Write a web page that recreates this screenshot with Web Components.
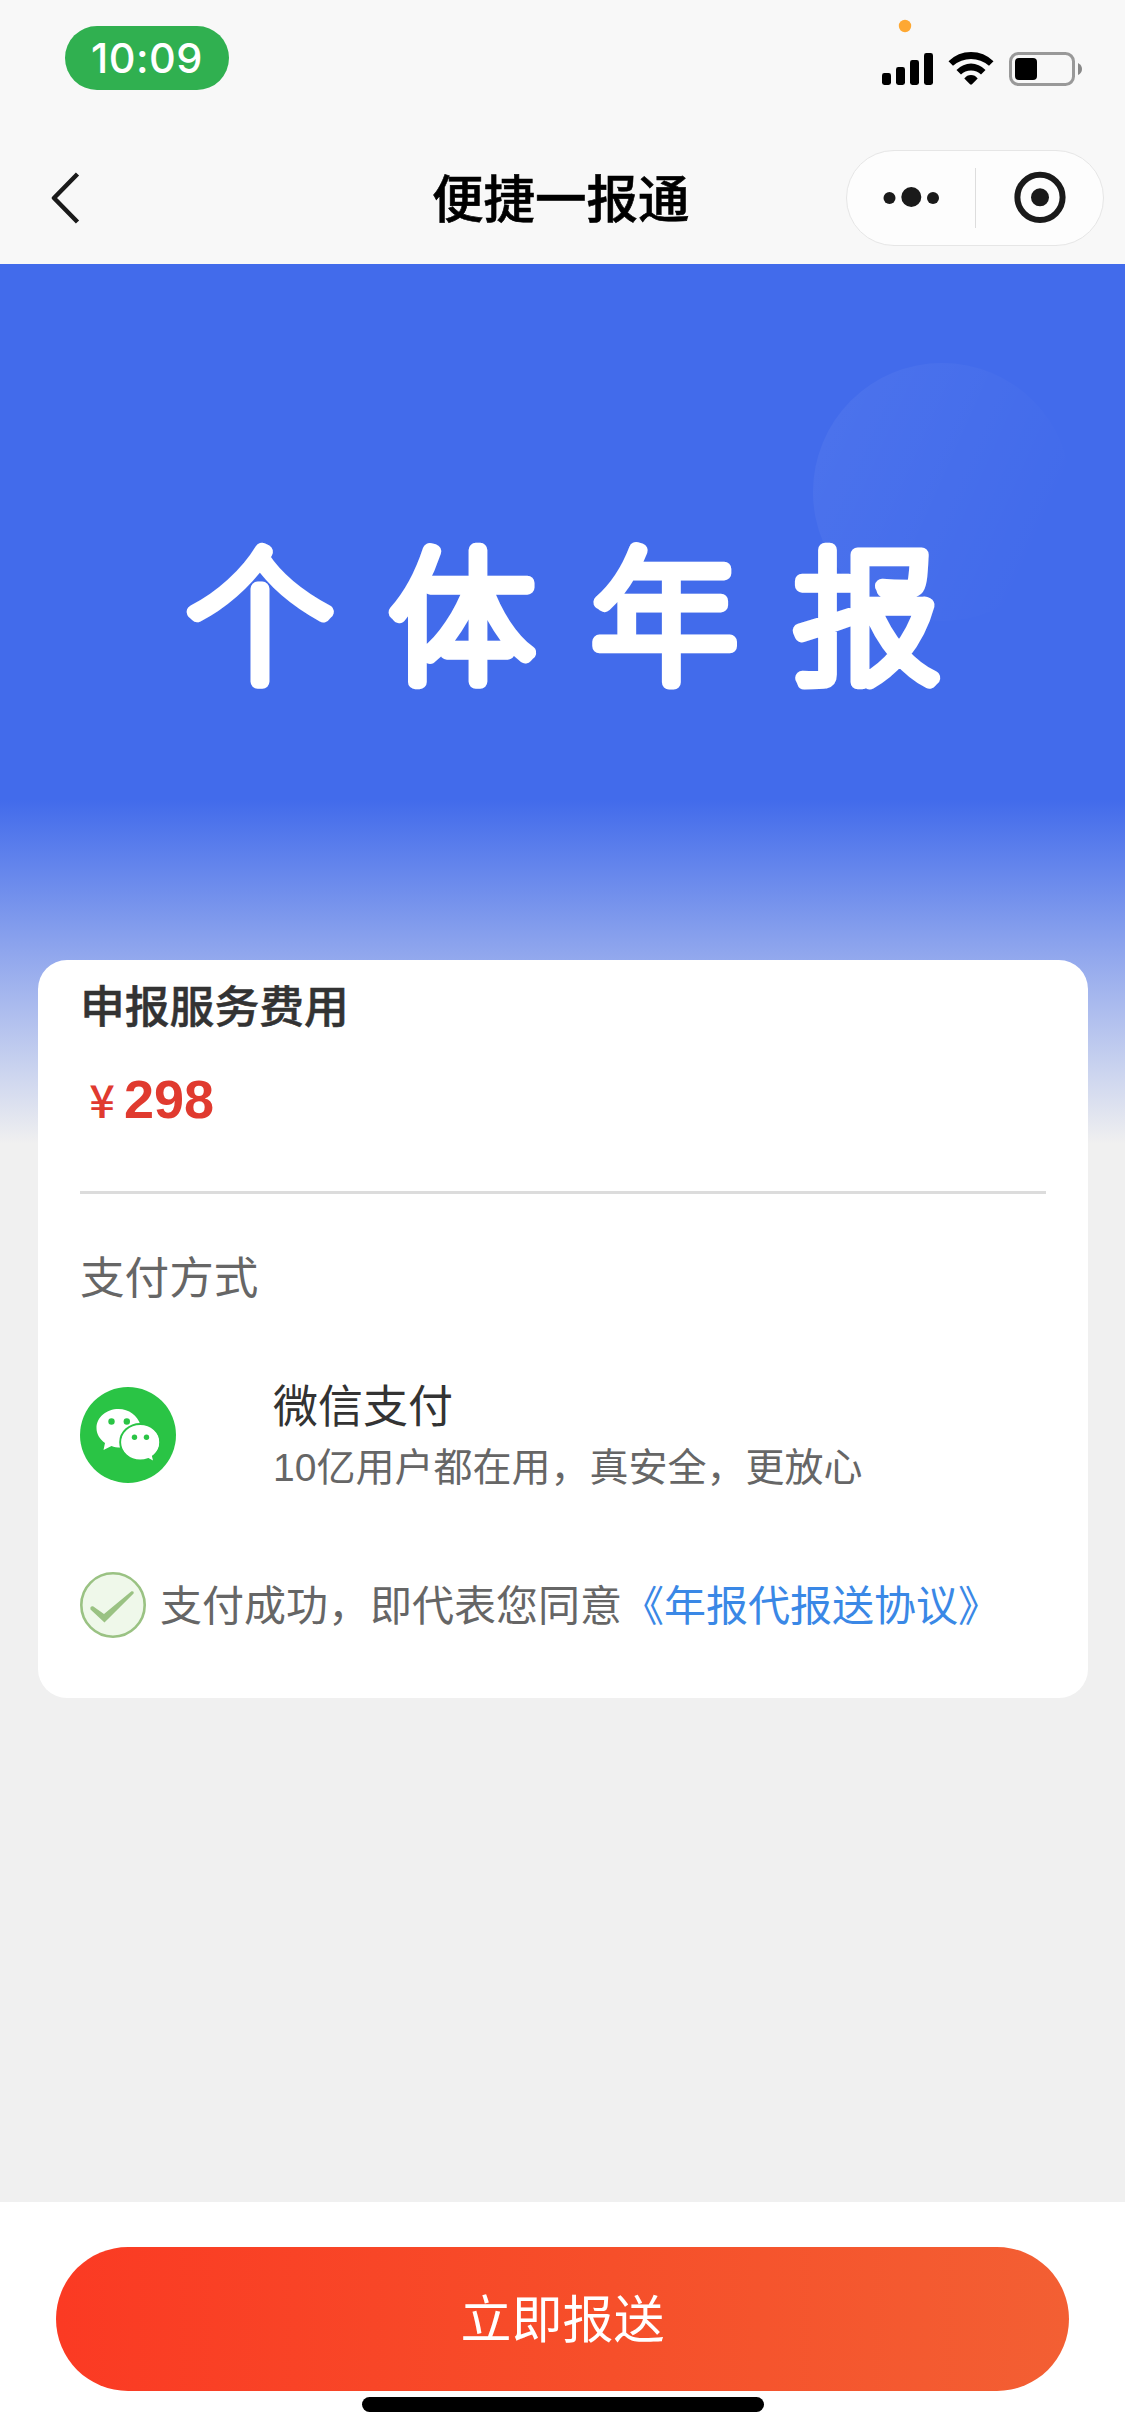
<!DOCTYPE html>
<html lang="zh-CN">
<head>
<meta charset="utf-8">
<title>便捷一报通</title>
<style>
html,body{margin:0;padding:0;background:#f0f0f0}
body{width:1125px;height:2436px;overflow:hidden;font-family:"Liberation Sans","Noto Sans CJK SC",sans-serif}
</style>
</head>
<body>
<report-app></report-app>
<script>
const define = (name, html) => {
  const t = document.createElement('template');
  t.innerHTML = '<style>*{box-sizing:border-box}svg{display:block;flex:none}</style>' + html;
  customElements.define(name, class extends HTMLElement {
    constructor() {
      super();
      this.attachShadow({mode: 'open'}).appendChild(t.content.cloneNode(true));
    }
  });
};

define('status-bar', `
<style>
:host{display:flex;justify-content:space-between;align-items:flex-start;height:114px;padding:0 43px 0 65px;background:#f8f8f8}
.time{margin-top:26px;width:164px;height:64px;border-radius:32px;background:#30b050;color:#fff;display:flex;align-items:center;justify-content:center;font:500 41.500px/64px Inter,sans-serif;letter-spacing:.5px}
</style>
<div class="time"><slot></slot></div>
<svg width="200" height="86" viewBox="882 0 200 86">
  <circle cx="905" cy="26" r="6.2" fill="#fea832"/>
  <rect x="882" y="73" width="9" height="12" rx="2.4"/><rect x="896" y="67" width="9" height="18" rx="2.4"/>
  <rect x="910" y="60" width="9" height="25" rx="2.4"/><rect x="924" y="53" width="9" height="32" rx="2.4"/>
  <path d="M948.500 61.200Q958 52 971 52T993.500 61.200L989 65.800Q981 59 971 59T953 65.800Z"/>
  <path d="M956.500 70Q963 63.500 971 63.500T985.500 70L981 74.400Q977 70.500 971 70.500T961 74.400Z"/>
  <path d="M964.300 78.400Q967 75 971 75T977.700 78.400L972 84.300Q971 85.200 970 84.300Z"/>
  <rect x="1010.500" y="53.500" width="63" height="31" rx="8" fill="none" stroke="#999" stroke-width="3"/>
  <rect x="1015" y="58" width="22" height="22" rx="4"/>
  <path d="M1078 63Q1082 65 1082 69T1078 75Z" fill="#888"/>
</svg>`);

define('nav-bar', `
<style>
:host{display:flex;align-items:center;height:150px;padding:18px 21px 0 51px;background:#f8f8f8}
h1{margin:0;padding-bottom:4px;font:500 51.500px/72px "Noto Sans CJK SC",sans-serif;color:#000;-webkit-text-stroke:.6px #000}
.left{width:381px}
.capsule{margin-left:auto;width:258px;height:96px;border:1px solid #e6e6e6;border-radius:48px;background:#fdfdfd}
</style>
<div class="left"><svg width="30" height="52" viewBox="51 172 30 52"><path d="M77.500 174L54 198L77.500 222" fill="none" stroke="#1a1a1a" stroke-width="4.500" stroke-linejoin="round"/></svg></div>
<h1><slot></slot></h1>
<div class="capsule"><svg width="256" height="94" viewBox="847 151 256 94" fill="#1a1a1a">
  <circle cx="889.500" cy="198" r="6"/><circle cx="911.300" cy="197" r="10"/><circle cx="933" cy="198" r="6"/>
  <path d="M975 168h1v60h-1z" fill="#ddd"/>
  <circle cx="1040" cy="197.300" r="22.600" fill="none" stroke="#1a1a1a" stroke-width="6"/><circle cx="1040" cy="197.300" r="9"/>
</svg></div>`);

define('hero-banner', `
<style>
:host{display:block;height:696px}
svg text{font-family:"Noto Sans CJK SC",sans-serif;font-weight:100;font-size:146px;fill:#fff;stroke:#fff;stroke-width:14.500px;stroke-linejoin:round;stroke-linecap:round;text-anchor:middle}
</style>
<svg width="1125" height="696" viewBox="0 264 1125 696">
  <defs><linearGradient id="g" x1="0" y1=".3" x2=".9" y2=".7"><stop offset="0" stop-color="#fff" stop-opacity=".05"/><stop offset="1" stop-color="#fff" stop-opacity="0"/></linearGradient></defs>
  <circle cx="942" cy="492" r="129" fill="url(#g)"/>
  <text x="260 462 664.5 867" y="671">个体年报</text>
</svg>`);

define('fee-summary', `
<style>
:host{display:flex;flex-direction:column;height:234px;border-bottom:3px solid #dcdcdc}
h2{margin:12px 0 0;font:500 44.800px/64px "Noto Sans CJK SC",sans-serif;color:#333;-webkit-text-stroke:.5px #333}
.price{display:flex;align-items:baseline;color:#e03a2f;margin-top:30px;line-height:66px}
.cur{font:500 45px/66px "Noto Sans CJK SC",sans-serif;width:44px;text-align:center}
.num{font-weight:700;font-size:54px}
</style>
<h2><slot name="label"></slot></h2>
<div class="price"><span class="cur">¥</span><span class="num"><slot></slot></span></div>`);

define('wechat-logo', `
<style>:host{display:block;width:96px;height:96px}</style>
<svg width="96" height="96" viewBox="0 0 96 96">
  <circle cx="48" cy="48" r="48" fill="#2ac445"/>
  <path d="M38.500 22C26.500 22 16.500 30.200 16.500 41C16.500 47 19.500 52 25 56L23.500 63L31.500 59C34 60 37 60.500 40.500 60.500A22 22 0 0 1 60.500 38C57.500 28.500 49 22 38.500 22Z" fill="#fff"/>
  <ellipse cx="60.200" cy="55.300" rx="20" ry="18.300" fill="#fff" stroke="#2ac445" stroke-width="2"/>
  <path d="M41.500 55.300C41.500 46 50 39 60.200 39S79 46 79 55.300C79 60.500 76.500 65 71.700 68.200L73 73.500L67.500 70.600C65 71.400 63 71.700 60.200 71.700C50 71.700 41.500 64.500 41.500 55.300Z" fill="#fff"/>
  <g fill="#2ac445"><circle cx="31.500" cy="34.500" r="3.200"/><circle cx="46.800" cy="34.500" r="3.200"/><circle cx="54.500" cy="50.300" r="2.700"/><circle cx="66.500" cy="50.300" r="2.700"/></g>
</svg>`);

define('pay-method', `
<style>
:host{display:flex;flex-direction:column}
.head{margin-top:49px;font:400 44.600px/64px "Noto Sans CJK SC",sans-serif;color:#666}
.row{display:flex;align-items:center;gap:97px;margin-top:62px;height:132px}
.name{font:400 45px/64px "Noto Sans CJK SC",sans-serif;color:#333}
.desc{font-size:39px;line-height:60px;color:#666;padding-top:2px}
</style>
<div class="head"><slot name="head"></slot></div>
<div class="row"><wechat-logo></wechat-logo><div><div class="name"><slot name="name"></slot></div><div class="desc"><slot></slot></div></div></div>`);

define('agree-line', `
<style>
:host{display:flex;align-items:center;gap:14px;margin-top:71px;height:66px;font:400 42px/60px "Noto Sans CJK SC",sans-serif;color:#666;white-space:nowrap}
::slotted(a){color:#3a88e6;text-decoration:none}
span{padding-bottom:4px}
</style>
<svg width="66" height="66" viewBox="0 0 66 66"><circle cx="33" cy="33" r="31.700" fill="#eff8ea" stroke="#9ac283" stroke-width="2.600"/>
<path d="M10.500 37.500Q9.800 34 13 34.300L24 42L51.500 19.200Q54.300 18.800 53.600 21.500L24.500 50.500Z" fill="#9ac283"/></svg>
<span><slot></slot></span>`);

define('pay-card', `
<style>:host{display:block;margin:0 37px 0 38px;height:738px;padding:0 42px;border-radius:29px;background:#fff}</style>
<slot></slot>`);

define('submit-bar', `
<style>
:host{display:flex;flex-direction:column;align-items:center;height:234px;padding-top:45px;background:#fff}
button{width:1013px;height:144px;border:0;border-radius:72px;padding:0 0 6px;background:linear-gradient(90deg,#fb3a23,#f64f2a 55%,#f35f33);color:#fff;font:400 51px/138px "Noto Sans CJK SC",sans-serif}
i{display:block;width:402px;height:15px;border-radius:8px;background:#000;margin-top:6px}
</style>
<button><slot></slot></button><i></i>`);

define('report-app', `
<style>
:host{display:flex;flex-direction:column;width:1125px;height:2436px;background:#f0f0f0}
main{flex:1;background:linear-gradient(#426beb 0 536px,#f0f0f0 880px) no-repeat 0 0/100% 880px}
</style>
<status-bar>10:09</status-bar>
<nav-bar>便捷一报通</nav-bar>
<main>
  <hero-banner></hero-banner>
  <pay-card>
    <fee-summary><span slot="label">申报服务费用</span>298</fee-summary>
    <pay-method><span slot="head">支付方式</span><span slot="name">微信支付</span>10亿用户都在用，真安全，更放心</pay-method>
    <agree-line>支付成功，即代表您同意<a href="#">《年报代报送协议》</a></agree-line>
  </pay-card>
</main>
<submit-bar>立即报送</submit-bar>`);
</script>
</body>
</html>
